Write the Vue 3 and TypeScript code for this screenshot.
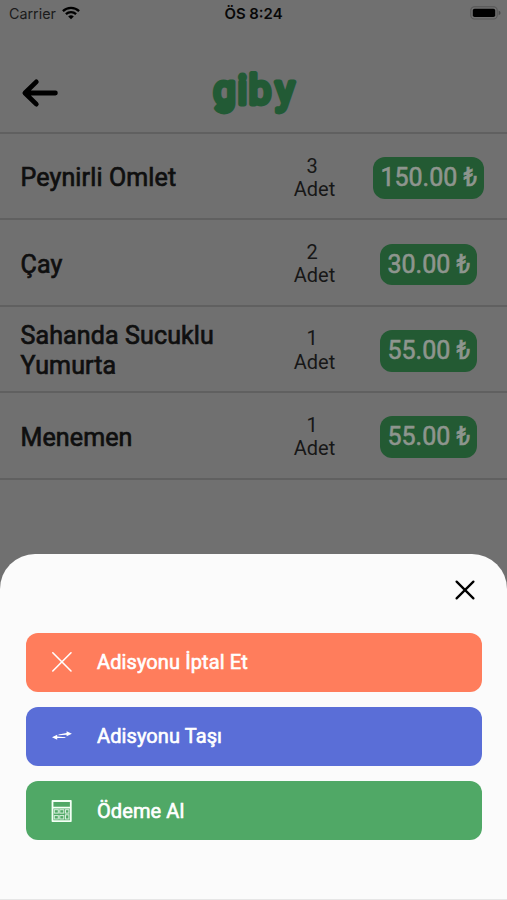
<script setup lang="ts">
interface OrderItem {
  name: string
  count: number
  price: string
}

interface Action {
  label: string
  kind: 'cancel' | 'move' | 'pay'
}

const items: OrderItem[] = [
  { name: 'Peynirli Omlet', count: 3, price: '150.00' },
  { name: 'Çay', count: 2, price: '30.00' },
  { name: 'Sahanda Sucuklu Yumurta', count: 1, price: '55.00' },
  { name: 'Menemen', count: 1, price: '55.00' },
]

const actions: Action[] = [
  { label: 'Adisyonu İptal Et', kind: 'cancel' },
  { label: 'Adisyonu Taşı', kind: 'move' },
  { label: 'Ödeme Al', kind: 'pay' },
]
</script>

<template>
  <div class="screen">
    <div class="status">
      <div class="carrier">
        <span>Carrier</span>
        <svg width="18" height="14" viewBox="0 0 18 14" fill="none" stroke="#000" stroke-width="2.3">
          <path d="M0.9 5.1C5.4 0.8 12.6 0.8 17.1 5.1" />
          <path d="M3.9 8.2C6.8 5.5 11.2 5.5 14.1 8.2" />
          <path d="M6.2 10.5Q9 8.2 11.8 10.5L9 13.3Z" fill="#000" stroke="none" />
        </svg>
      </div>
      <span class="clock">ÖS 8:24</span>
      <svg class="battery" width="31" height="14" viewBox="0 0 31 14">
        <rect x="0.8" y="0.8" width="26.4" height="12.2" rx="3.6" fill="none" stroke="#565656" stroke-width="1.1" />
        <rect x="2.8" y="2.7" width="22.4" height="8.4" rx="1.8" fill="#000" />
        <path d="M28.6 4.6Q30.6 5.4 30.6 6.9T28.6 9.2Z" fill="#4b4b4b" />
      </svg>
    </div>

    <header class="header">
      <svg class="back" width="38" height="30" viewBox="0 0 38 30" fill="none" stroke="#000" stroke-width="4.8" stroke-linecap="round" stroke-linejoin="round">
        <path d="M15.3 3.9L3.9 15L15.3 26.1M4.5 15H34.4" />
      </svg>
      <svg class="logo" width="90" height="64" viewBox="0 0 90 64">
        <text x="4.2 28.4 39.8 66.4" y="42.6">giby</text>
      </svg>
    </header>

    <main class="list">
      <div v-for="item in items" :key="item.name" class="row">
        <div class="name">{{ item.name }}</div>
        <div class="count">{{ item.count + ' \nAdet' }}</div>
        <div class="price-cell">
          <span class="price">{{ item.price }} ₺</span>
        </div>
      </div>
    </main>

    <section class="sheet">
      <div class="sheet-top">
        <svg width="22" height="22" viewBox="0 0 22 22" fill="none" stroke="#000" stroke-width="2.3" stroke-linecap="round">
          <path d="M2.6 2.6L19.4 19.4M19.4 2.6L2.6 19.4" />
        </svg>
      </div>
      <div class="actions">
        <button v-for="a in actions" :key="a.kind" class="action" :class="a.kind">
          <svg v-if="a.kind === 'cancel'" width="22" height="22" viewBox="0 0 22 22" fill="none" stroke="#fff" stroke-width="1.6" stroke-linecap="round">
            <path d="M1.8 1.8L20 20M20 1.8L1.8 20" />
          </svg>
          <svg v-else-if="a.kind === 'move'" width="22" height="22" viewBox="0 0 22 22" fill="#fff">
            <path d="M7.5 9.4L15.6 8V6.2L20.9 8.7L15.6 11.2V9.7L7.5 10.3Z" />
            <path d="M14.4 13L6.2 13.1V14.8L1 12.2L6.2 9.7V11.4L14.4 12.2Z" />
          </svg>
          <svg v-else width="22" height="22" viewBox="0 0 22 22">
            <path fill="#f3fff5" fill-rule="evenodd" d="M1.4 0H19.9Q20.7 0 20.7 .8V21.2Q20.7 22 19.9 22H1.4Q.6 22 .6 21.2V.8Q.6 0 1.4 0ZM2.4 2V6.7H18.9V2ZM2.4 8.6V20.2H18.9V8.6Z" />
            <g fill="none" stroke="#d9f0de" stroke-width="1">
              <rect x="3.3" y="9.7" width="4" height="3.4" />
              <rect x="8.8" y="9.7" width="4" height="3.4" />
              <rect x="3.3" y="15.6" width="4" height="3.4" />
              <rect x="8.8" y="15.6" width="4" height="3.4" />
              <rect x="14.5" y="9.7" width="3.4" height="3.4" />
              <rect x="14.5" y="14.8" width="3.4" height="4.2" />
            </g>
          </svg>
          <span>{{ a.label }}</span>
        </button>
      </div>
      <div class="home-line"></div>
    </section>
  </div>
</template>

<style>
body {
  background: #707070;
}
</style>

<style scoped>
.screen {
  height: 900px;
  overflow: hidden;
  display: flex;
  flex-direction: column;
  background: #707070;
  font-family: Roboto, 'Liberation Sans', sans-serif;
  color: #0f0f0f;
}
.status {
  height: 26px;
  display: grid;
  grid-template-columns: 1fr auto 1fr;
  align-items: center;
  padding: 0 6px 0 9px;
  font-family: Inter, sans-serif;
  font-size: 14.3px;
}
.carrier {
  display: flex;
  align-items: center;
  gap: 6px;
  color: #1b1b1b;
}
.clock {
  font-weight: 600;
  font-size: 14.9px;
  padding-top: 1px;
  margin-right: 3px;
  color: #080808;
}
.battery {
  justify-self: end;
}
.header {
  height: 106px;
  display: grid;
  grid-template-columns: 1fr 90px 1fr;
  align-items: center;
  padding: 28px 21px 0;
  box-sizing: border-box;
}
.logo text {
  font-family: Roboto, sans-serif;
  font-weight: 400;
  font-size: 40px;
  fill: #225a35;
  stroke: #225a35;
  stroke-width: 4.8px;
  stroke-linejoin: round;
}
.list {
  border-top: 2.4px solid #606060;
}
.row {
  height: 86.4px;
  box-sizing: border-box;
  display: grid;
  grid-template-columns: 240px 70px 1fr;
  align-items: center;
  column-gap: 19px;
  padding: 3.6px 17.6px 0 20.5px;
  border-bottom: 2.4px solid #606060;
}
.name {
  font-size: 25px;
  line-height: 29.3px;
  letter-spacing: 0.13px;
  -webkit-text-stroke: 0.7px #0f0f0f;
}
.count {
  white-space: pre;
  text-align: center;
  font-size: 20px;
  line-height: 23.4px;
  color: #171717;
}
.price-cell {
  display: flex;
  justify-content: center;
}
.price {
  display: block;
  padding: 0 7px;
  height: 41.5px;
  line-height: 42.5px;
  border-radius: 12px;
  background: #235a33;
  color: #8e958e;
  font-size: 25px;
  white-space: nowrap;
  -webkit-text-stroke: 0.6px #8e958e;
}
.sheet {
  margin-top: auto;
  height: 346px;
  box-sizing: border-box;
  display: flex;
  flex-direction: column;
  border-radius: 35px 35px 0 0;
  background: #fbfbfb;
}
.sheet-top {
  height: 78.5px;
  box-sizing: border-box;
  padding: 24.6px 31px 0 0;
  display: flex;
  justify-content: flex-end;
}
.actions {
  padding: 0 25px 0 26px;
  display: grid;
  gap: 15.1px;
}
.action {
  height: 59.2px;
  border: 0;
  border-radius: 12px;
  padding: 0 0 0 25px;
  display: flex;
  align-items: center;
  gap: 24px;
  font: 20px Roboto, sans-serif;
  letter-spacing: 0.1px;
  color: #fff;
  -webkit-text-stroke: 0.6px #fff;
}
.cancel {
  background: #ff7d5c;
}
.move {
  background: #5a6ed7;
}
.pay {
  background: #50a866;
}
.home-line {
  margin-top: auto;
  height: 1px;
  background: #e6e6e6;
}
</style>
